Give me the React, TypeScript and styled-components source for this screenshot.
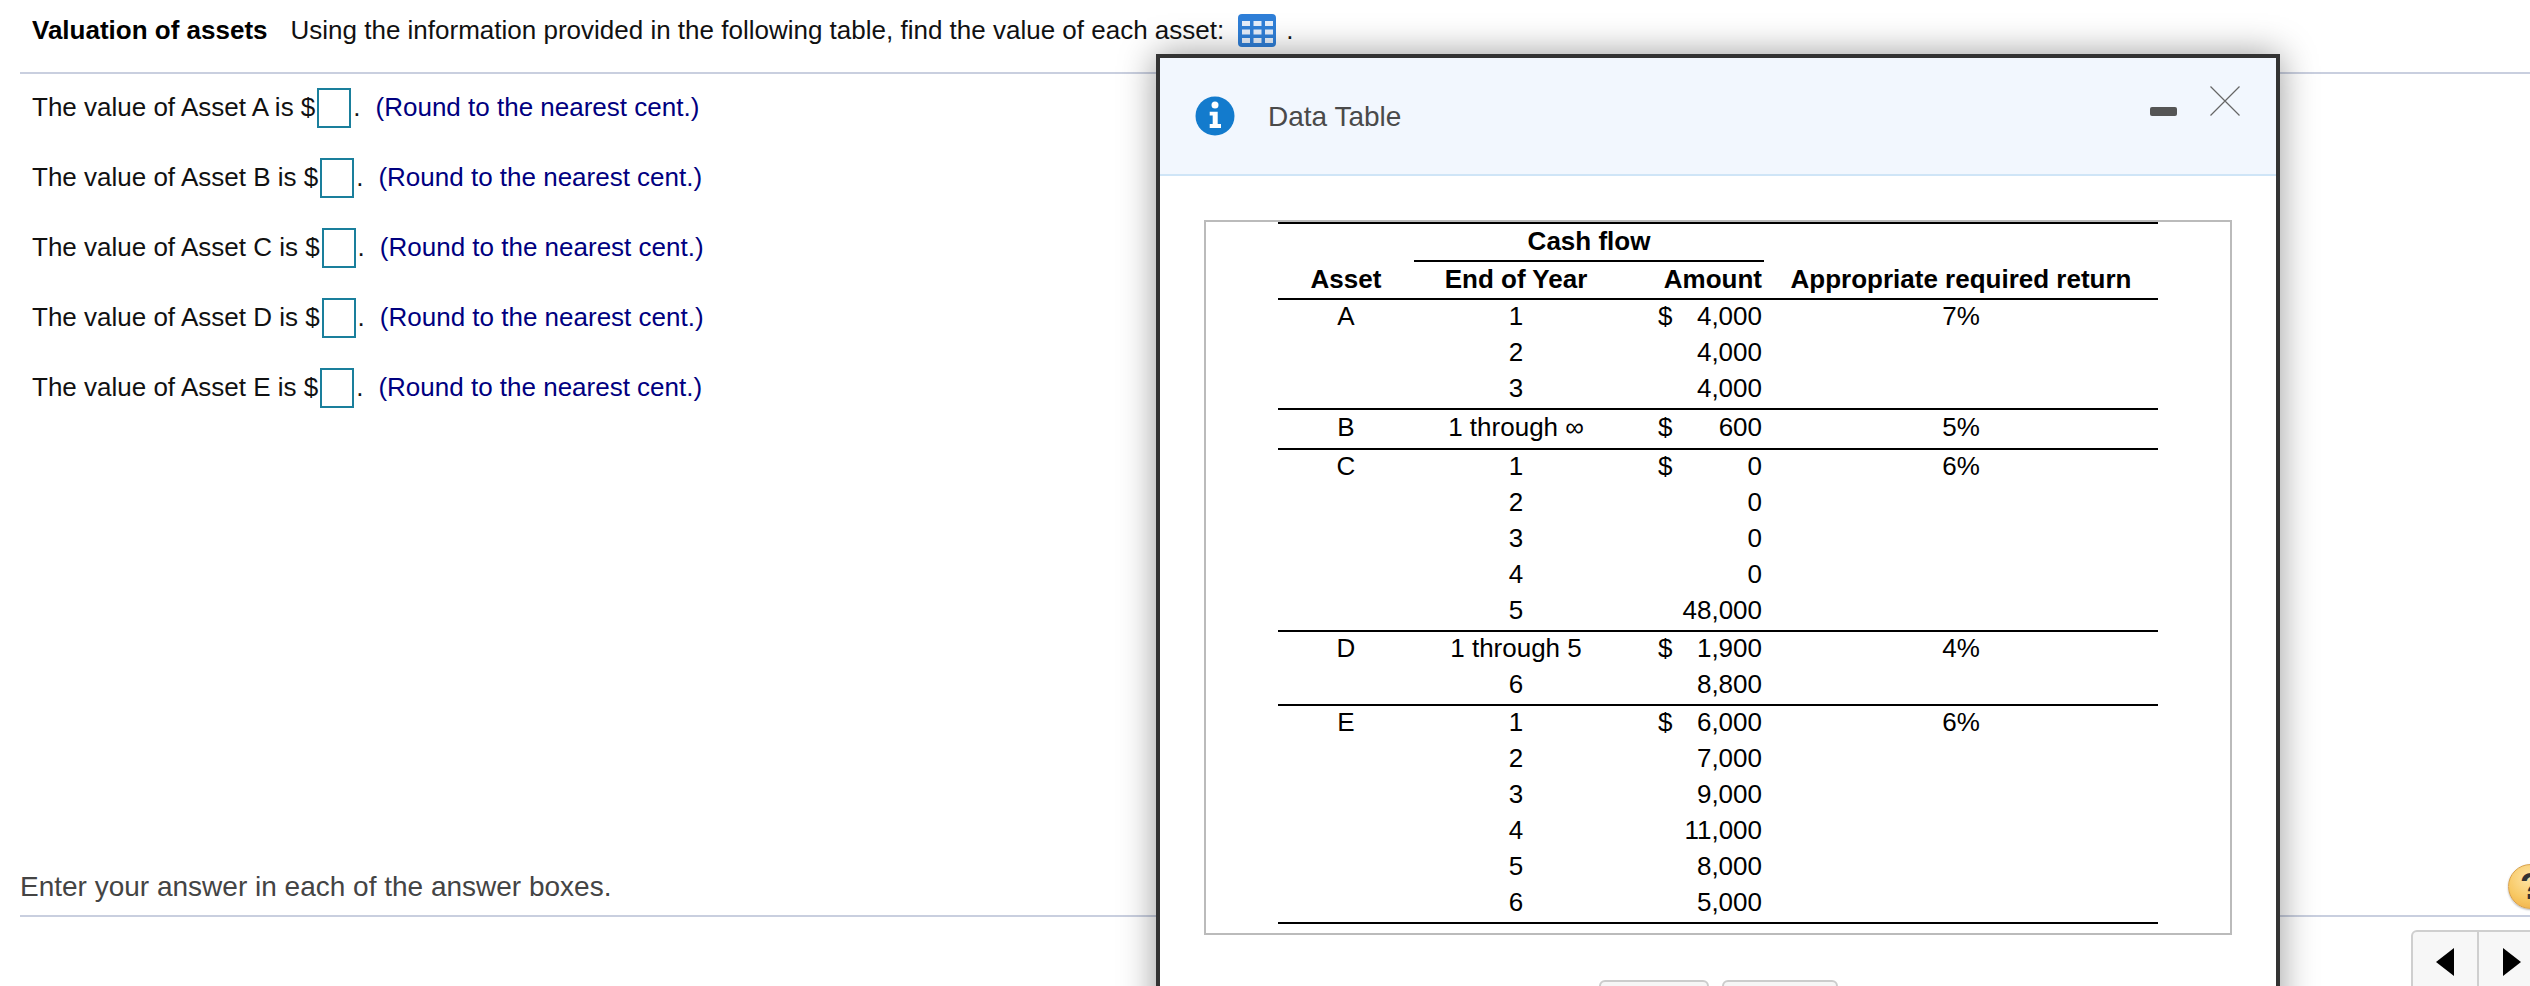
import React from 'react'
import styled, { createGlobalStyle } from 'styled-components'

const GlobalStyle = createGlobalStyle`
    html, body {
        margin: 0;
        padding: 0;
        background: #fff;
    }
`

const Page = styled.div`
    position: relative;
    width: 2530px;
    height: 986px;
    overflow: hidden;
    display: flex;
    flex-direction: column;
    background: #fff;
    font-family: "Liberation Sans", Arial, sans-serif;
    font-size: 26px;
    color: #111;
`

const Question = styled.div`
    height: 72px;
    padding: 0 0 12px 32px;
    display: flex;
    align-items: center;
    box-sizing: border-box;
`

const QuestionTitle = styled.b`
    margin-right: 23px;
    color: #000;
`

const GridButton = styled.svg`
    width: 38px;
    height: 33px;
    margin: 0 10px 0 14px;
`

const GridCells = styled.g`
    filter: blur(0.7px);
`

const Rule = styled.div`
    height: 2px;
    margin-left: 20px;
    background: #c9cfdf;
`

const Answers = styled.div`
    flex: 1;
    padding: 14px 0 0 32px;
    display: flex;
    flex-direction: column;
    gap: 30px;
`

const AnswerRow = styled.div`
    height: 40px;
    display: flex;
    align-items: center;
    white-space: pre;
`

const AnswerText = styled.span`
    margin-bottom: 2px;
`

const Blank = styled.span`
    width: 34px;
    height: 40px;
    box-sizing: border-box;
    border: 2px solid #1a7f9c;
    margin: 0 2px 0 2px;
`

const Hint = styled.span`
    color: #000080;
    margin: 0 0 2px 15px;
`

const Footer = styled.div`
    height: 62px;
    padding: 4px 0 0 20px;
    box-sizing: border-box;
    display: flex;
    align-items: center;
    justify-content: space-between;
    color: #444;
    font-size: 28px;
`

const FooterText = styled.span`
    margin-top: 2px;
`

const HelpButton = styled.div`
    width: 45px;
    height: 45px;
    flex: none;
    margin-right: -23px;
    border-radius: 50%;
    border: 1px solid #d9a24c;
    box-sizing: border-box;
    background: radial-gradient(circle at 45% 30%, #fde3a4 0%, #f8c965 55%, #eda63d 100%);
    box-shadow: 0 1px 2px rgba(0, 0, 0, 0.3);
    color: #333;
    font-weight: bold;
    font-size: 36px;
    line-height: 43px;
    padding-left: 11px;
`

const Nav = styled.div`
    height: 69px;
    display: flex;
    justify-content: flex-end;
    padding-top: 13px;
    box-sizing: border-box;
`

const NavGroup = styled.div`
    display: flex;
    margin-right: -17px;
    height: 70px;
    border: 2px solid #cfcfcf;
    border-radius: 6px 0 0 0;
    background: #f7f7f7;
`

const NavButton = styled.div<{ last?: boolean }>`
    width: 66px;
    display: flex;
    justify-content: center;
    padding-top: 16px;
    box-sizing: border-box;
    border-right: ${p => (p.last ? 'none' : '2px solid #cfcfcf')};
`

const Arrow = styled.svg`
    width: 18px;
    height: 28px;
`

const Modal = styled.div`
    position: absolute;
    left: 1156px;
    top: 54px;
    width: 1124px;
    height: 1000px;
    box-sizing: border-box;
    border: 4px solid #333;
    background: #fff;
    box-shadow: 0 0 34px rgba(0, 0, 0, 0.4);
    display: flex;
    flex-direction: column;
`

const ModalHeader = styled.div`
    height: 118px;
    flex: none;
    box-sizing: border-box;
    border-bottom: 2px solid #cfe5f7;
    background: #f2f7fe;
    display: flex;
    align-items: flex-start;
    color: #4a4a4a;
    font-size: 28px;
`

const InfoIcon = styled.svg`
    width: 40px;
    height: 40px;
    margin: 38px 0 0 35px;
`

const ModalTitle = styled.span`
    margin: 43px 0 0 33px;
    flex: 1;
`

const MinimizeBar = styled.span`
    width: 27px;
    height: 9px;
    border-radius: 2px;
    background: #555;
    margin-top: 49px;
`

const CloseIcon = styled.svg`
    width: 30px;
    height: 30px;
    margin: 28px 36px 0 33px;
`

const TableBox = styled.div`
    margin: 44px 44px 0;
    padding: 0 72px 9px;
    border: 2px solid #bbb;
`

const DataTable = styled.table`
    width: 880px;
    table-layout: fixed;
    border-collapse: separate;
    border-spacing: 0;
    color: #000;
    font-size: 26px;
`

const Cell = styled.td<{ rule?: boolean; h: number; last?: boolean }>`
    box-sizing: border-box;
    height: ${p => p.h}px;
    padding: 0 0 3px;
    text-align: center;
    border-top: ${p => (p.rule ? '2px solid #000' : 'none')};
    border-bottom: ${p => (p.last ? '2px solid #000' : 'none')};
    vertical-align: middle;
    white-space: pre;
`

const Head = styled.th<{ rule?: boolean; right?: boolean }>`
    box-sizing: border-box;
    height: 38px;
    padding: ${p => (p.right ? '0 2px 2px 0' : '0 0 2px')};
    font-weight: bold;
    text-align: ${p => (p.right ? 'right' : 'center')};
    border-top: ${p => (p.rule ? '2px solid #000' : '2px solid transparent')};
    vertical-align: middle;
    white-space: pre;
`

const AmountCell = styled.div`
    display: flex;
    justify-content: space-between;
    padding: 0 2px 0 40px;
`

const ModalActions = styled.div`
    display: flex;
    justify-content: center;
    gap: 13px;
    margin-top: 45px;
`

const ActionButton = styled.div<{ w: number }>`
    width: ${p => p.w}px;
    height: 44px;
    box-sizing: border-box;
    border: 2px solid #ccc;
    border-radius: 6px;
    background: #f6f6f6;
`

const answers = ['A', 'B', 'C', 'D', 'E']

type Row = { asset?: string; year: string; cash?: boolean; amount: string; rate?: string; h?: number }

const rows: Row[] = [
    { asset: 'A', year: '1', cash: true, amount: '4,000', rate: '7%', h: 38 },
    { year: '2', amount: '4,000' },
    { year: '3', amount: '4,000' },
    { asset: 'B', year: '1 through ∞', cash: true, amount: '600', rate: '5%', h: 40 },
    { asset: 'C', year: '1', cash: true, amount: '0', rate: '6%', h: 38 },
    { year: '2', amount: '0' },
    { year: '3', amount: '0' },
    { year: '4', amount: '0' },
    { year: '5', amount: '48,000' },
    { asset: 'D', year: '1 through 5', cash: true, amount: '1,900', rate: '4%', h: 38 },
    { year: '6', amount: '8,800' },
    { asset: 'E', year: '1', cash: true, amount: '6,000', rate: '6%', h: 38 },
    { year: '2', amount: '7,000' },
    { year: '3', amount: '9,000' },
    { year: '4', amount: '11,000' },
    { year: '5', amount: '8,000' },
    { year: '6', amount: '5,000' },
]

function App() {
    return (
        <Page>
            <GlobalStyle />
            <Question>
                <QuestionTitle>Valuation of assets</QuestionTitle>
                <span>Using the information provided in the following table, find the value of each asset:</span>
                <GridButton viewBox="0 0 38 33">
                    <rect width="38" height="33" rx="4" fill="#2f7fd8" />
                    <GridCells>
                        {[4, 15.5, 27].map(x =>
                            [7, 15.5, 24].map(y => (
                                <rect key={`${x}-${y}`} x={x} y={y} width="8" height="5" fill="#e6effb" />
                            ))
                        )}
                    </GridCells>
                </GridButton>
                <span>.</span>
            </Question>
            <Rule />
            <Answers>
                {answers.map(a => (
                    <AnswerRow key={a}>
                        <AnswerText>The value of Asset {a} is $</AnswerText>
                        <Blank />
                        <AnswerText>.</AnswerText>
                        <Hint>(Round to the nearest cent.)</Hint>
                    </AnswerRow>
                ))}
            </Answers>
            <Footer>
                <FooterText>Enter your answer in each of the answer boxes.</FooterText>
                <HelpButton>?</HelpButton>
            </Footer>
            <Rule />
            <Nav>
                <NavGroup>
                    <NavButton>
                        <Arrow viewBox="0 0 18 28"><polygon points="18,0 18,28 0,14" fill="#000" /></Arrow>
                    </NavButton>
                    <NavButton last>
                        <Arrow viewBox="0 0 18 28"><polygon points="0,0 0,28 18,14" fill="#000" /></Arrow>
                    </NavButton>
                </NavGroup>
            </Nav>

            <Modal>
                <ModalHeader>
                    <InfoIcon viewBox="0 0 40 40">
                        <circle cx="20" cy="20" r="19.5" fill="#137bcd" />
                        <circle cx="20" cy="9" r="3.5" fill="#fff" />
                        <path d="M14.7 15.7h8v12.4H26V32H14.7v-3.9h3v-8.6h-3z" fill="#fff" />
                    </InfoIcon>
                    <ModalTitle>Data Table</ModalTitle>
                    <MinimizeBar />
                    <CloseIcon viewBox="0 0 30 30">
                        <path d="M0.5 0.5L29.5 29.5M29.5 0.5L0.5 29.5" stroke="#666" strokeWidth="1.2" fill="none" />
                    </CloseIcon>
                </ModalHeader>
                <TableBox>
                    <DataTable>
                        <colgroup>
                            <col width="136" />
                            <col width="204" />
                            <col width="146" />
                            <col width="394" />
                        </colgroup>
                        <thead>
                            <tr>
                                <Head rule />
                                <Head rule colSpan={2}>Cash flow</Head>
                                <Head rule />
                            </tr>
                            <tr>
                                <Head>Asset</Head>
                                <Head rule>End of Year</Head>
                                <Head rule right>Amount</Head>
                                <Head>Appropriate required return</Head>
                            </tr>
                        </thead>
                        <tbody>
                            {rows.map((r, i) => {
                                const rule = !!r.asset
                                const h = r.h || 36
                                const last = i === rows.length - 1
                                return (
                                    <tr key={i}>
                                        <Cell rule={rule} last={last} h={last ? h + 2 : h}>{r.asset}</Cell>
                                        <Cell rule={rule} last={last} h={last ? h + 2 : h}>{r.year}</Cell>
                                        <Cell rule={rule} last={last} h={last ? h + 2 : h}>
                                            <AmountCell>
                                                <span>{r.cash ? '$' : ''}</span>
                                                <span>{r.amount}</span>
                                            </AmountCell>
                                        </Cell>
                                        <Cell rule={rule} last={last} h={last ? h + 2 : h}>{r.rate}</Cell>
                                    </tr>
                                )
                            })}
                        </tbody>
                    </DataTable>
                </TableBox>
                <ModalActions>
                    <ActionButton w={110} />
                    <ActionButton w={116} />
                </ModalActions>
            </Modal>
        </Page>
    )
}

export default App
